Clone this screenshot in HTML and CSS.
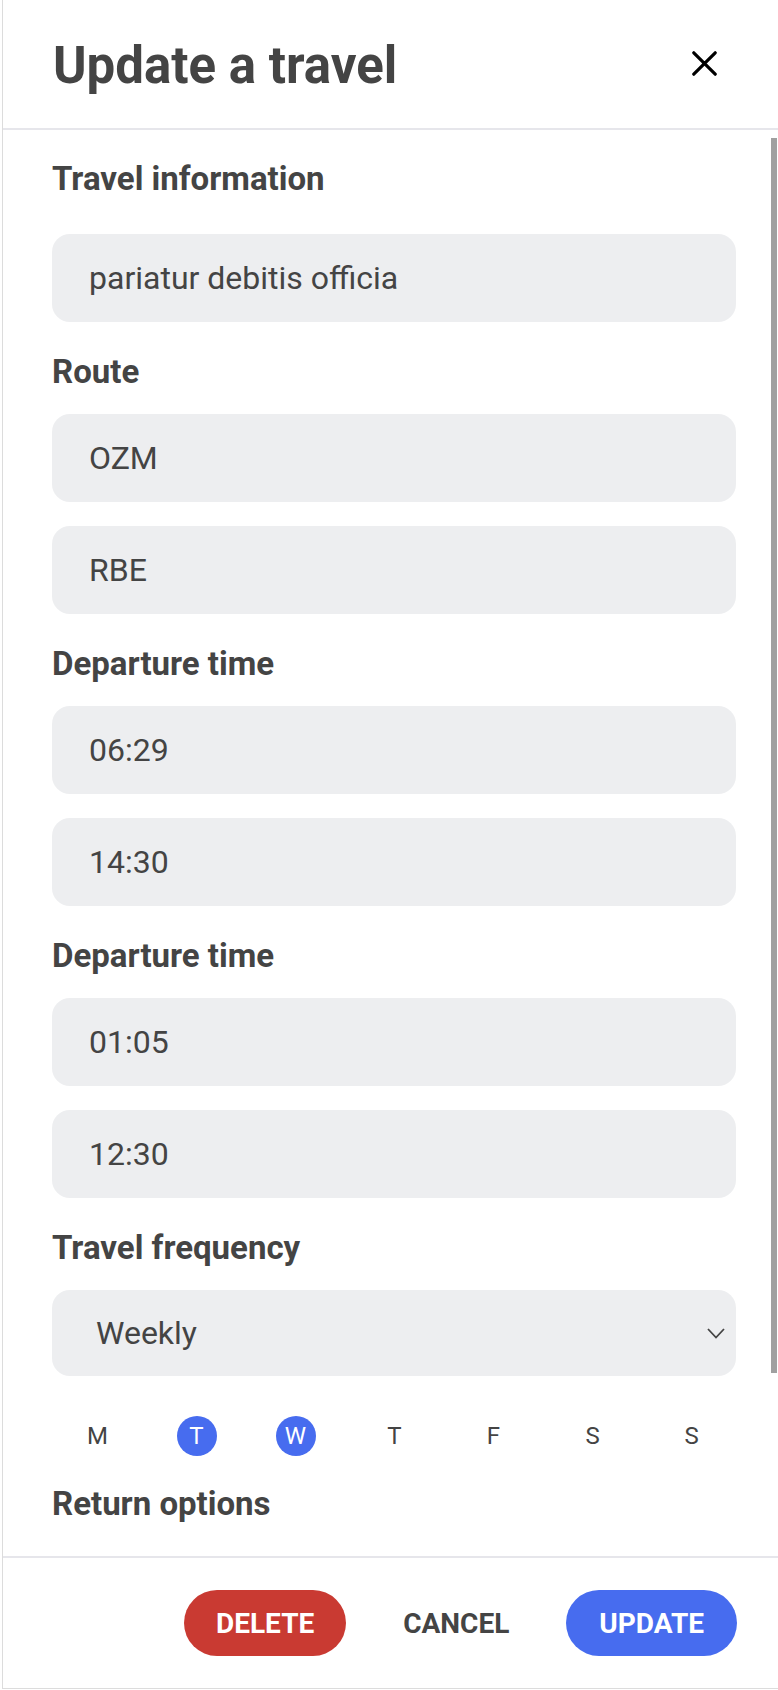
FILE: index.html
```html
<!DOCTYPE html>
<html lang="en">
<head>
<meta charset="utf-8">
<title>Update a travel</title>
<link rel="stylesheet" href="styles.css">
</head>
<body>
<div class="panel">
  <header class="panel-header">
    <h1 class="panel-title">Update a travel</h1>
    <button class="close-btn" aria-label="Close">
      <svg width="25" height="25" viewBox="0 0 25 25"><path d="M1.8 1.8 L23.2 23.2 M23.2 1.8 L1.8 23.2" stroke="#000" stroke-width="3.2" stroke-linecap="round" fill="none"/></svg>
    </button>
  </header>

  <section class="panel-body">
    <div class="scroll-thumb"></div>
    <h2 class="label label-first">Travel information</h2>
    <div class="field">pariatur debitis officia</div>

    <h2 class="label">Route</h2>
    <div class="field">OZM</div>
    <div class="field field-next">RBE</div>

    <h2 class="label">Departure time</h2>
    <div class="field">06:29</div>
    <div class="field field-next">14:30</div>

    <h2 class="label">Departure time</h2>
    <div class="field">01:05</div>
    <div class="field field-next">12:30</div>

    <h2 class="label">Travel frequency</h2>
    <div class="select">
      <span class="select-value">Weekly</span>
      <svg class="chevron" width="18" height="11" viewBox="0 0 18 11"><path d="M1 1 L9 9.5 L17 1" stroke="#444" stroke-width="1.8" fill="none"/></svg>
    </div>

    <div class="days">
      <span class="day">M</span>
      <span class="day day-on">T</span>
      <span class="day day-on">W</span>
      <span class="day">T</span>
      <span class="day">F</span>
      <span class="day">S</span>
      <span class="day">S</span>
    </div>

    <h2 class="label label-return">Return options</h2>
  </section>

  <footer class="panel-footer">
    <button class="btn btn-delete">DELETE</button>
    <button class="btn btn-cancel">CANCEL</button>
    <button class="btn btn-update">UPDATE</button>
  </footer>
</div>
</body>
</html>
```

FILE: styles.css
```css
* { box-sizing: border-box; }

html, body {
  margin: 0;
  padding: 0;
  background: #fff;
}

body {
  font-family: Roboto, "Liberation Sans", sans-serif;
  color: #444;
}

.panel {
  margin-left: 2px;
  width: 776px;
  height: 1689px;
  border-left: 1px solid #dcdcdc;
  border-bottom: 1px solid #dcdcdc;
  display: flex;
  flex-direction: column;
}

.panel-header {
  height: 130px;
  flex: none;
  display: flex;
  align-items: center;
  justify-content: space-between;
  padding: 0 61px 2px 50px;
  border-bottom: 2px solid #e6e6eb;
}

.panel-title {
  margin: 5px 0 0;
  font-size: 51px;
  line-height: 60px;
  font-weight: 700;
  color: #444;
}

.close-btn {
  border: none;
  background: none;
  padding: 0;
  width: 25px;
  height: 25px;
  display: flex;
}

.panel-body {
  position: relative;
  height: 1426px;
  flex: none;
  overflow: hidden;
  padding: 29px 42px 0 49px;
  display: flex;
  flex-direction: column;
}

.scroll-thumb {
  position: absolute;
  right: 1px;
  top: 8px;
  width: 6px;
  height: 1235px;
  background: #a0a0a0;
}

.label {
  margin: 30px 0 22px;
  font-size: 33px;
  line-height: 40px;
  font-weight: 700;
  color: #444;
}

.label-first {
  margin-top: 0;
  margin-bottom: 35px;
}

.label-return {
  margin-top: 28px;
}

.field {
  height: 88px;
  flex: none;
  background: #edeef0;
  border-radius: 18px;
  padding-left: 37px;
  font-size: 32px;
  line-height: 88px;
  color: #444;
}

.field-next {
  margin-top: 24px;
}

.select {
  height: 86px;
  flex: none;
  background: #edeef0;
  border-radius: 18px;
  padding: 0 11px 0 44px;
  display: flex;
  align-items: center;
  justify-content: space-between;
  font-size: 32px;
  color: #444;
}

.chevron {
  margin-top: 1px;
}

.days {
  margin: 40px 0 0 -4px;
  display: grid;
  grid-template-columns: repeat(7, 99px);
  height: 40px;
}

.day {
  justify-self: center;
  width: 40px;
  height: 40px;
  border-radius: 50%;
  display: flex;
  align-items: center;
  justify-content: center;
  font-size: 24px;
  color: #444;
}

.day-on {
  background: #476cef;
  color: #fff;
}

.panel-footer {
  flex: 1;
  border-top: 2px solid #e6e6eb;
  display: flex;
  align-items: center;
  justify-content: flex-end;
  gap: 25px;
  padding: 0 41px 0 0;
}

.btn {
  height: 66px;
  border: none;
  border-radius: 33px;
  padding: 0 32px;
  font-family: Roboto, "Liberation Sans", sans-serif;
  font-size: 28px;
  font-weight: 700;
  background: transparent;
  color: #444;
}

.btn-delete {
  background: #c93a32;
  color: #fff;
}

.btn-update {
  background: #476cef;
  color: #fff;
  padding: 0 33px;
}
```
